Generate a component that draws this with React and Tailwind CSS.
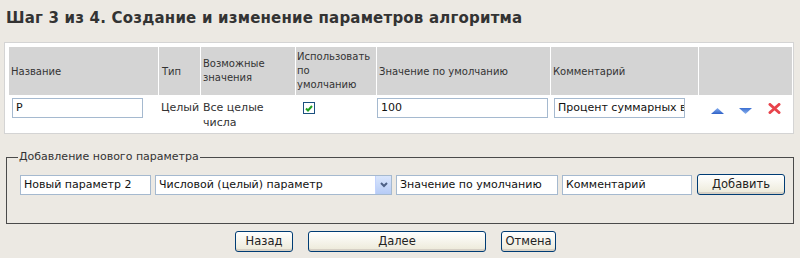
import React from "react"

const font = "font-['Tahoma','DejaVu_Sans',sans-serif]"

function XpButton({ children, w }) {
    return (
        <button className={`${w} h-[21px] rounded-[3px] border border-[#003c74] bg-gradient-to-b from-[#ffffff] to-[#ece9d8] text-[11.5px] text-[#222] shadow-[inset_0_-2px_0_#d6d0c5]`}>
            {children}
        </button>
    )
}

function Field({ w, value }) {
    return (
        <div className={`${w} h-[20px] border border-[#a5b9cf] bg-white px-[3px] text-[11px] leading-[18px] text-[#111] whitespace-nowrap overflow-hidden`}>
            {value}
        </div>
    )
}

export default function App() {
    return (
        <div className={`w-[800px] h-[258px] bg-[#ECE9E3] pl-[4px] ${font} overflow-hidden`}>
            {/* title */}
            <h1 className="pt-[8px] pl-[2px] h-[42px] text-[15px] leading-[20px] font-bold text-[#333] tracking-[0.2px] whitespace-nowrap">
                Шаг 3 из 4. Создание и изменение параметров алгоритма
            </h1>

            {/* parameters table */}
            <div className="w-[790px] h-[92px] border border-[#d4d4d4] bg-white p-[4px]">
                <div className="grid grid-cols-[149px_41px_94px_80px_173px_147px_93px] gap-x-px text-[10px] text-[#333]">
                    <div className="h-[48px] bg-[#d4d4d4] flex items-center pl-[2px]">Название</div>
                    <div className="h-[48px] bg-[#d4d4d4] flex items-center pl-[3px]">Тип</div>
                    <div className="h-[48px] bg-[#d4d4d4] flex items-center pl-[2px] leading-[14px]">Возможные<br />значения</div>
                    <div className="h-[48px] bg-[#d4d4d4] flex items-center pl-[1px] leading-[14px]">Использовать<br />по<br />умолчанию</div>
                    <div className="h-[48px] bg-[#d4d4d4] flex items-center pl-[2px]">Значение по умолчанию</div>
                    <div className="h-[48px] bg-[#d4d4d4] flex items-center pl-[2px]">Комментарий</div>
                    <div className="h-[48px] bg-[#d4d4d4]"></div>

                    <div className="pt-[3px] pl-[3px]"><Field w="w-[131px]" value="P" /></div>
                    <div className="pt-[5px] pl-[2px] text-[11px] leading-[15px]">Целый</div>
                    <div className="pt-[5px] pl-[2px] text-[11px] leading-[15px]">Все целые<br />числа</div>
                    <div className="pt-[7px] pl-[7px]">
                        <div className="w-[12px] h-[12px] border border-[#1c5180] bg-white flex items-center justify-center">
                            <svg width="8" height="7" viewBox="0 0 8 7">
                                <path d="M1 3.5 L3 5.5 L7 1" stroke="#21a121" strokeWidth="2" fill="none" />
                            </svg>
                        </div>
                    </div>
                    <div className="pt-[3px]"><Field w="w-[171px]" value="100" /></div>
                    <div className="pt-[3px] pl-[3px]"><Field w="w-[131px]" value="Процент суммарных выплат" /></div>
                    <div className="flex items-start pt-[8px] pl-[12px] gap-[15px]">
                        <svg width="13" height="6" viewBox="0 0 13 6" className="mt-[5px]">
                            <defs>
                                <linearGradient id="up" x1="0" y1="0" x2="0" y2="1">
                                    <stop offset="0" stopColor="#86aef0" />
                                    <stop offset="1" stopColor="#2f62c8" />
                                </linearGradient>
                            </defs>
                            <path d="M6.5 0 L13 6 L0 6 Z" fill="url(#up)" />
                        </svg>
                        <svg width="13" height="6" viewBox="0 0 13 6" className="mt-[5px]">
                            <defs>
                                <linearGradient id="dn" x1="0" y1="0" x2="0" y2="1">
                                    <stop offset="0" stopColor="#3a6fd2" />
                                    <stop offset="1" stopColor="#8cb2ee" />
                                </linearGradient>
                            </defs>
                            <path d="M0 0 L13 0 L6.5 6 Z" fill="url(#dn)" />
                        </svg>
                        <svg width="13" height="11" viewBox="0 0 13 11" className="ml-[1px]">
                            <path d="M2 1.5 L11 9.5 M11 1.5 L2 9.5" stroke="#e8434b" strokeWidth="3" strokeLinecap="round" />
                        </svg>
                    </div>
                </div>
            </div>

            {/* add new parameter */}
            <fieldset className="mt-[15px] ml-[2px] w-[787px] h-[75px] border border-[#4a4a4a] pl-[13px] pr-[8px]">
                <legend className="ml-[-2px] px-[1px] text-[11px] text-[#333] leading-[16px]">Добавление нового параметра</legend>
                <div className="flex items-center mt-[9px] gap-[4px]">
                    <Field w="w-[131px]" value="Новый параметр 2" />
                    <div className="w-[237px] h-[20px] border border-[#a5b9cf] bg-white flex text-[11px] text-[#111]">
                        <div className="flex-1 px-[3px] leading-[18px] whitespace-nowrap">Числовой (целый) параметр</div>
                        <div className="w-[16px] h-[18px] bg-gradient-to-b from-[#dae6fc] to-[#b6cbf6] border-l border-[#c3d3fd] flex items-center justify-center">
                            <svg width="8" height="6" viewBox="0 0 8 6">
                                <path d="M1 1 L4 4 L7 1" stroke="#4d6185" strokeWidth="2" fill="none" />
                            </svg>
                        </div>
                    </div>
                    <Field w="w-[162px]" value="Значение по умолчанию" />
                    <Field w="w-[130px]" value="Комментарий" />
                    <XpButton w="w-[88px] ml-[1px]">Добавить</XpButton>
                </div>
            </fieldset>

            {/* navigation */}
            <div className="flex items-center mt-[7px] ml-[231px] gap-[15px]">
                <XpButton w="w-[58px]">Назад</XpButton>
                <XpButton w="w-[178px]">Далее</XpButton>
                <XpButton w="w-[55px]">Отмена</XpButton>
            </div>
        </div>
    )
}
